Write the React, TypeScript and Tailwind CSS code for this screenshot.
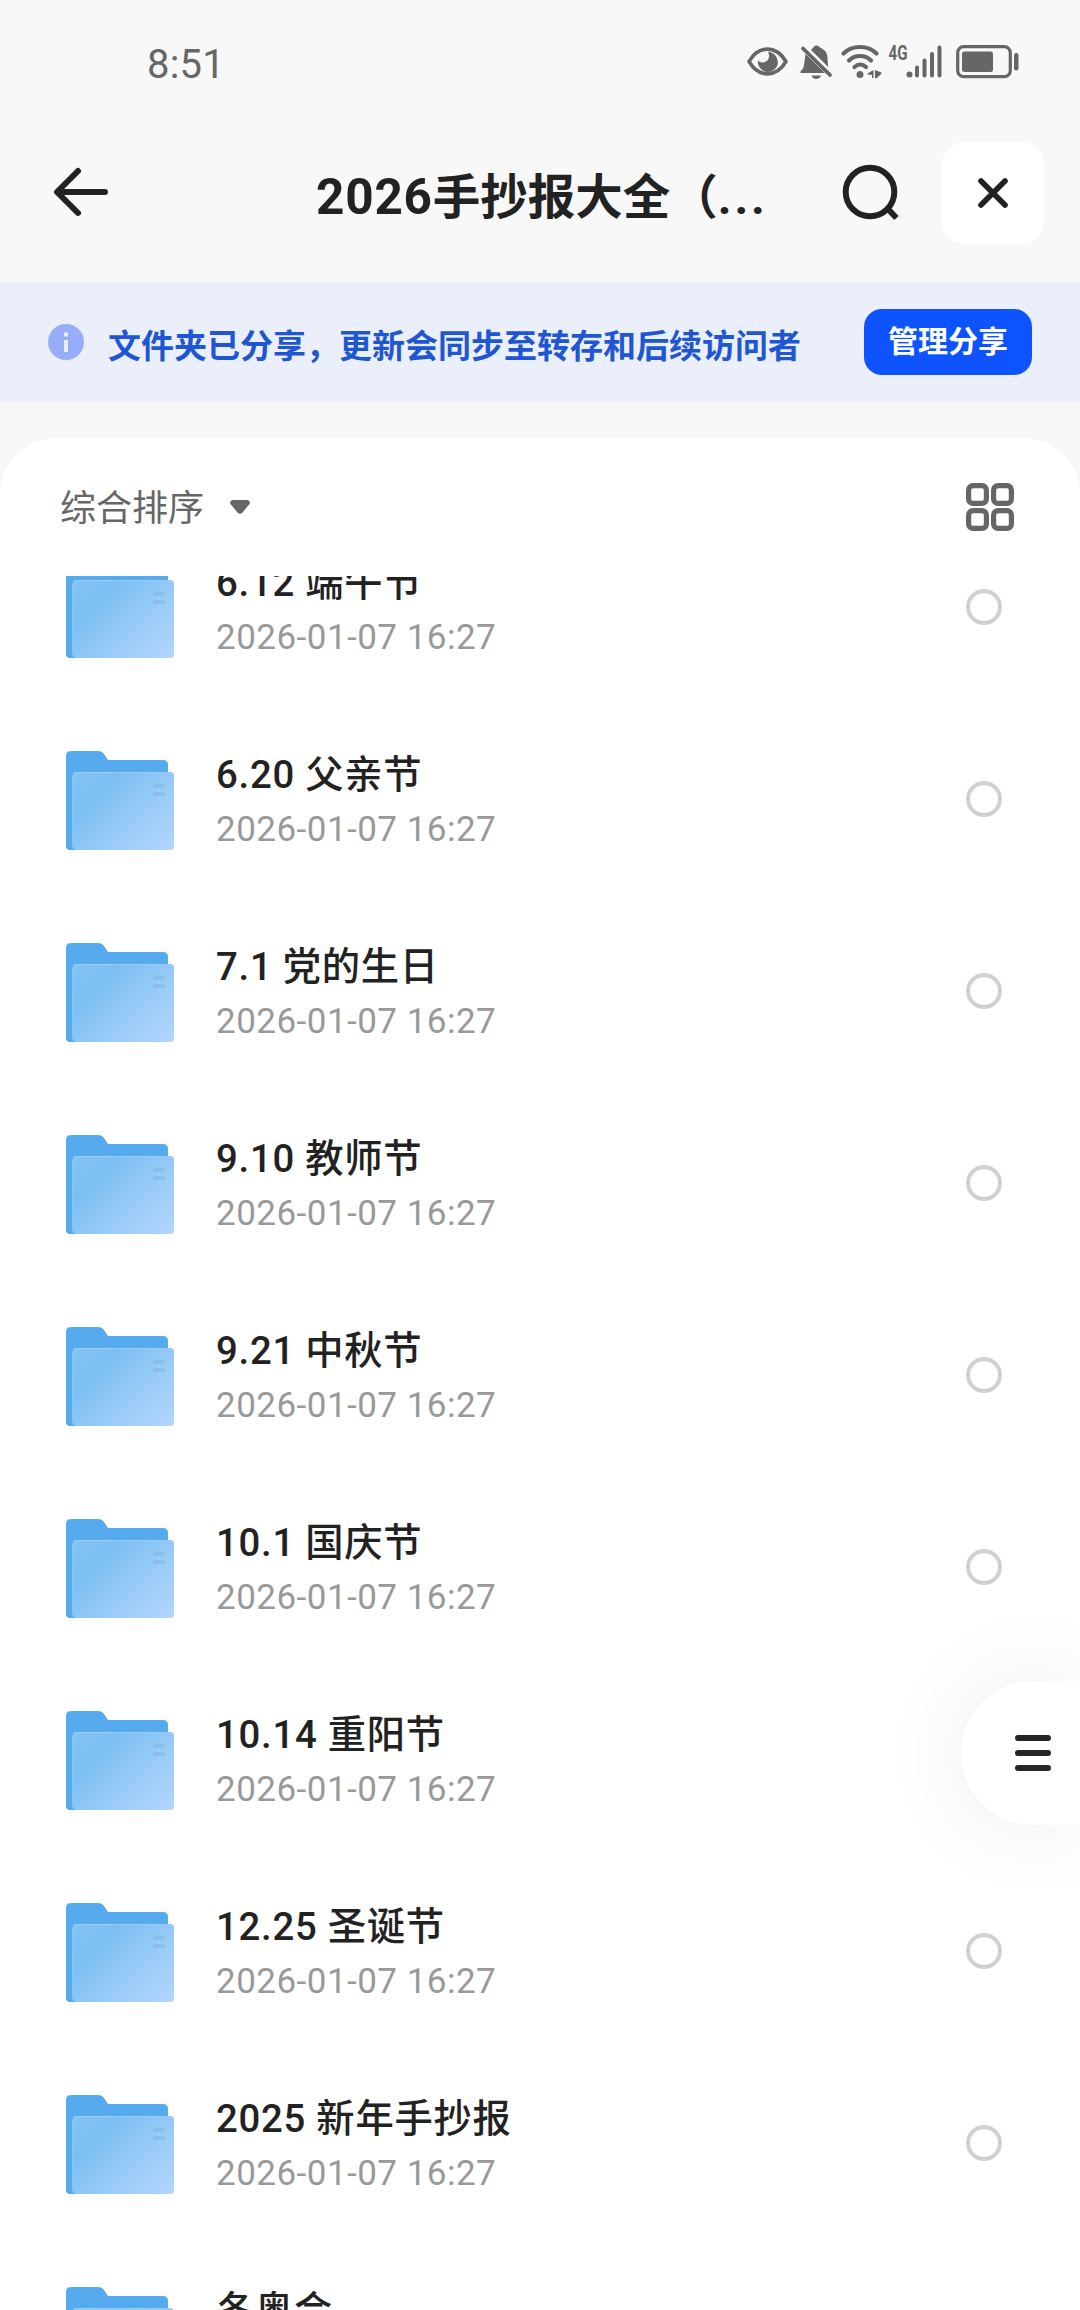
const folders = [
  "6.12 端午节",
  "6.20 父亲节",
  "7.1 党的生日",
  "9.10 教师节",
  "9.21 中秋节",
  "10.1 国庆节",
  "10.14 重阳节",
  "12.25 圣诞节",
  "2025 新年手抄报",
  "冬奥会",
];

function StatusBar() {
  return (
    <div className="flex h-32 shrink-0 items-start justify-between pr-[60px] pl-[147px] text-[#666]">
      <span className="mt-10 text-[40px] leading-[50px] tracking-[0.200px]">8:51</span>
      <div className="mt-[42px] flex h-10 items-center">
        {/* Eye comfort */}
        <svg width="42" height="40" viewBox="0 0 42 40" fill="none">
          <path d="M2 19.500C12 3 29 3 39 19.500C29 36 12 36 2 19.500Z" stroke="currentColor" strokeWidth="3.600" strokeLinejoin="round" />
          <path d="M21 10A10 10 0 1 1 11 18.500Q13 21 16.500 20.500Q22.500 19 22 13.500Q21.800 11.500 21 10Z" fill="currentColor" />
        </svg>
        {/* Muted bell */}
        <svg className="ml-[11px]" width="33" height="40" viewBox="0 0 33 40" fill="none">
          <path d="M5.500 12L25 31H1.500C0 31 0 29.500 1 29C4.500 26 4 22 5.500 12ZM11 8C12 6.500 13 6 14 4.500C15.500 3 17.500 3 19 4.500C20 6.500 26.500 7 27.300 14C27.700 17.500 27.700 20 28.200 25Z" fill="currentColor" />
          <path d="M3 6.500L30 33" stroke="currentColor" strokeWidth="3.800" strokeLinecap="round" />
          <path d="M11.500 33.500H21C20 38 12.500 38 11.500 33.500Z" fill="currentColor" />
        </svg>
        {/* Wifi */}
        <svg className="ml-[7px]" width="42" height="40" viewBox="0 0 42 40" fill="none" stroke="currentColor" strokeWidth="4.200" strokeLinecap="round">
          <path d="M3.500 11.500C12 2.800 28 2.800 36.500 11.500M9 18.500C14.500 12.500 25.500 12.500 31 18.500M14.500 25C18 21.800 22.500 21.800 26 25" />
          <circle cx="20" cy="32.500" r="3.500" fill="currentColor" stroke="none" />
          <path d="M33.500 28V36H32V33L27.500 32.500V31.500ZM35 28L41.500 30.500V31.500L37 36H35Z" fill="currentColor" stroke="none" />
        </svg>
        {/* Mobile signal */}
        <svg className="ml-[6px]" width="56" height="40" viewBox="0 0 56 40" fill="none" stroke="currentColor" strokeWidth="4" strokeLinecap="round">
          <text x="0.500" y="17.500" fontFamily="Roboto, sans-serif" fontSize="20.500" fontWeight="700" textLength="19" lengthAdjust="spacingAndGlyphs" fill="currentColor" stroke="none">
            4G
          </text>
          <circle cx="21.500" cy="32.500" r="3" fill="currentColor" stroke="none" />
          <path d="M29 25.500V33.500M36.500 18.500V33.500M44 12V33.500M51.500 5.500V33.500" />
        </svg>
        {/* Battery */}
        <svg className="ml-3" width="64" height="40" viewBox="0 0 64 40" fill="none">
          <rect x="1.700" y="4.700" width="52.600" height="30" rx="6" stroke="currentColor" strokeWidth="3.200" />
          <rect x="6" y="9.500" width="31" height="20.500" rx="2.500" fill="currentColor" />
          <rect x="58" y="11" width="4.500" height="17.500" rx="2.200" fill="currentColor" />
        </svg>
      </div>
    </div>
  );
}

function Header() {
  return (
    <header className="flex h-[154px] shrink-0 pr-9 pl-[52px] text-[#222]">
      <svg className="mt-[38px]" width="58" height="52" viewBox="0 0 58 52" fill="none" stroke="currentColor" strokeWidth="6" strokeLinecap="round" strokeLinejoin="round">
        <path d="M26 5L5 26L26 47M5.500 26H53" />
      </svg>
      <h1 className="mt-[34px] ml-[206px] w-[480px] text-[47.500px] leading-[70px] font-bold whitespace-nowrap">
        <span className="text-[49.500px] tracking-[0.800px]">2026</span>手抄报大全（<span className="tracking-[2.800px]">...</span>
      </h1>
      <svg className="mt-[36px] ml-[46px] shrink-0" width="60" height="60" viewBox="0 0 60 60" fill="none" stroke="currentColor" strokeWidth="6">
        <circle cx="28" cy="28" r="24.300" />
        <path d="M44.500 43.500L54.500 54" />
      </svg>
      <button className="mt-[14px] ml-auto flex size-[102px] shrink-0 items-center justify-center rounded-[22px] bg-white">
        <svg width="34" height="34" viewBox="0 0 34 34" fill="none" stroke="currentColor" strokeWidth="5.600" strokeLinecap="round">
          <path d="M5 5L29 29M29 5L5 29" />
        </svg>
      </button>
    </header>
  );
}

function ShareBanner() {
  return (
    <div className="flex h-30 shrink-0 items-center bg-[#ebeefb] pr-12 pl-12">
      <svg width="36" height="36" viewBox="0 0 36 36">
        <circle cx="18" cy="18" r="18" fill="#97adf9" />
        <rect x="16" y="8.500" width="4" height="4" fill="#ebeefb" />
        <rect x="16" y="16" width="4" height="12" fill="#ebeefb" />
      </svg>
      <p className="mt-2.5 ml-6 text-[33px] leading-[48px] font-bold whitespace-nowrap text-[#1f56d2]">文件夹已分享，更新会同步至转存和后续访问者</p>
      <button className="ml-auto flex h-[66px] w-[168px] items-center justify-center rounded-[18px] bg-[#0d53ff] text-[30px] leading-none font-bold text-white">
        管理分享
      </button>
    </div>
  );
}

function FolderIcon() {
  return (
    <svg className="mt-0.5" width="108" height="99" viewBox="0 0 108 99">
      <defs>
        <linearGradient id="folderFront" x1="0" y1="0.100" x2="1" y2="0.900">
          <stop offset="0" stopColor="#83c2f3" />
          <stop offset="0.250" stopColor="#7dbff2" />
          <stop offset="0.650" stopColor="#9accf7" />
          <stop offset="1" stopColor="#afd5fc" />
        </linearGradient>
      </defs>
      <path d="M0 5Q0 0 5 0H33Q36 0 38 3L42 9H97Q102 9 102 14V90H10V99H4Q0 99 0 95Z" fill="#56abee" />
      <rect x="6.500" y="21" width="101.500" height="78" rx="4" fill="url(#folderFront)" />
      <path d="M7 95V25Q7 21.500 11 21.500H104" fill="none" stroke="#98cdf8" />
      <path d="M87 33H98V36.500H87ZM87 41.500H99V44.500H87Z" fill="#86b9e6" opacity="0.800" />
    </svg>
  );
}

function FolderRow({ name }: { name: string }) {
  return (
    <li className="flex h-48 items-center pr-[78px] pl-[66px]">
      <FolderIcon />
      <div className="mt-[6px] ml-[42px]">
        <p className="text-[38.300px] leading-[56px] font-medium tracking-[0.750px] whitespace-nowrap text-[#222]">{name}</p>
        <p className="text-[35px] leading-[54px] tracking-[0.480px] whitespace-nowrap text-[#999]">2026-01-07 16:27</p>
      </div>
      <span className="ml-auto size-9 rounded-full border-4 border-[#d0d0d0]" />
    </li>
  );
}

export default function App() {
  return (
    <div className="relative flex h-[2310px] w-[1080px] flex-col overflow-hidden bg-[#f8f8f8] font-[Roboto,'Noto_Sans_CJK_SC',sans-serif]">
      <StatusBar />
      <Header />
      <ShareBanner />
      <div className="flex min-h-0 flex-1 flex-col bg-[#f6f8f8] pt-9">
        <main className="flex min-h-0 flex-1 flex-col rounded-t-[56px] bg-white">
          <div className="flex h-[138px] shrink-0 items-center pr-[66px] pl-[60px] text-[#666]">
            <span className="mt-[3px] text-[36px] leading-[52px]">综合排序</span>
            <svg className="ml-[26px]" width="20" height="14" viewBox="0 0 20 14">
              <path d="M3 0H17Q21 0.500 19.500 4L12.500 12.500Q10 15 7.500 12.500L0.500 4Q-1 0.500 3 0Z" fill="currentColor" />
            </svg>
            <svg className="ml-auto" width="48" height="48" viewBox="0 0 48 48" fill="none" stroke="currentColor" strokeWidth="5.200">
              <rect x="2.600" y="2.600" width="17.800" height="17.800" rx="4.500" />
              <rect x="27.600" y="2.600" width="17.800" height="17.800" rx="4.500" />
              <rect x="2.600" y="27.600" width="17.800" height="17.800" rx="4.500" />
              <rect x="27.600" y="27.600" width="17.800" height="17.800" rx="4.500" />
            </svg>
          </div>
          <div className="min-h-0 flex-1 overflow-hidden">
            <ul className="-mt-[65px]">
              {folders.map((name) => (
                <FolderRow key={name} name={name} />
              ))}
            </ul>
          </div>
        </main>
      </div>

      {/* Floating menu tab */}
      <button className="absolute top-[1681px] right-0 flex h-36 w-[119px] items-center rounded-l-full bg-white pl-[54px] shadow-[0_0_90px_rgba(0,0,0,0.080)]">
        <svg width="36" height="36" viewBox="0 0 36 36" fill="none" stroke="#262626" strokeWidth="6" strokeLinecap="round">
          <path d="M3 3H33M3 18H33M3 33H33" />
        </svg>
      </button>
    </div>
  );
}
